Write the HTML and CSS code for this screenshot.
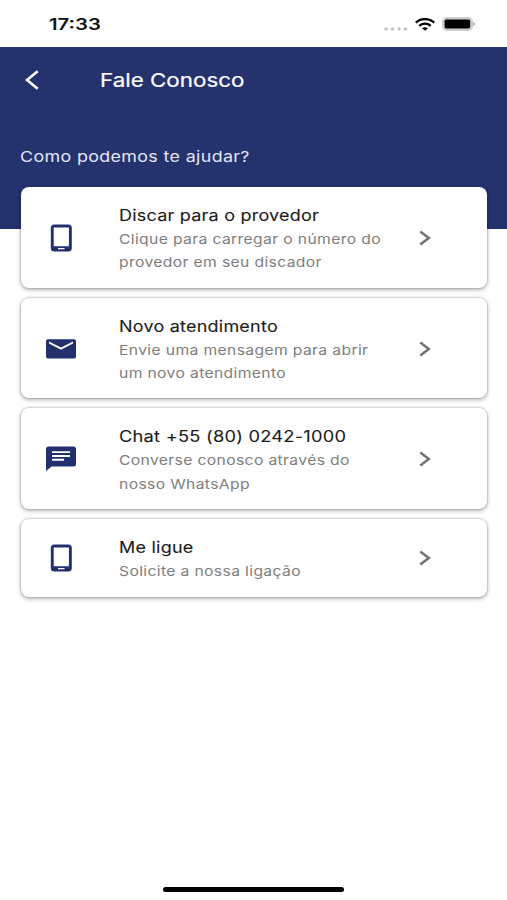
FILE: index.html
```html
<!DOCTYPE html>
<html lang="pt-BR">
<head>
<meta charset="utf-8">
<title>Fale Conosco</title>
<link rel="stylesheet" href="styles.css">
</head>
<body>
<div class="status">
  <span class="time">17:33</span>
  <div class="indicators">
    <svg class="dots" width="24" height="4" viewBox="0 0 24 4" fill="#c4c4c4"><circle cx="2" cy="2" r="1.8"/><circle cx="8.5" cy="2" r="1.8"/><circle cx="15" cy="2" r="1.8"/><circle cx="21.5" cy="2" r="1.8"/></svg>
    <svg class="wifi" width="20" height="13" viewBox="0 0 20 13" fill="none" stroke="#000" stroke-width="2.3"><path d="M.8 4.6C6-.2 14-.2 19.2 4.6M4.3 7.8c3.3-2.9 8.1-2.9 11.4 0"/><path d="M7 10.3c1.8-1.4 4.2-1.4 6 0L10 12.8z" fill="#000" stroke="none"/></svg>
    <svg class="battery" width="34" height="14" viewBox="0 0 34 14"><rect x=".9" y=".9" width="29.2" height="12.2" rx="4" fill="#ccc" stroke="#ccc" stroke-width="1.8"/><rect x="2.6" y="2.5" width="25.6" height="9" rx="1.8"/><path d="M31.3 5c2 .6 2 3.4 0 4z" fill="#aaa"/></svg>
  </div>
</div>
<header class="header">
  <div class="bar">
    <svg class="back" width="14" height="20" viewBox="0 0 14 20" fill="none" stroke="#fff" stroke-width="2.7"><path d="M12.7 1.2 2 10l10.7 8.8"/></svg>
    <h1 class="heading">Fale Conosco</h1>
  </div>
  <p class="question">Como podemos te ajudar?</p>
</header>
<main class="cards">
  <section class="card">
    <svg class="icon" viewBox="0 0 30 30" fill="#22306d"><path fill-rule="evenodd" d="M8.3 1.5h14a3.5 3.5 0 0 1 3.5 3.5v20a3.5 3.5 0 0 1-3.5 3.5h-14A3.5 3.5 0 0 1 4.8 25V5a3.5 3.5 0 0 1 3.5-3.5zM7.7 4.6v18.6h15.2V4.6zM12 25v1.3h6.5V25z"/></svg>
    <div class="text"><h2 class="title">Discar para o provedor</h2><p class="desc">Clique para carregar o número do<br>provedor em seu discador</p></div>
    <svg class="chevron" viewBox="0 0 12 16"><path d="M1.3 1.5 9.8 8l-8.5 6.5"/></svg>
  </section>
  <section class="card">
    <svg class="icon" viewBox="0 0 30 30" fill="#22306d"><path fill-rule="evenodd" d="M2 5.2h26a2 2 0 0 1 2 2v15.4a2 2 0 0 1-2 2H2a2 2 0 0 1-2-2V7.2a2 2 0 0 1 2-2zM3 7.5v2.1l12 6.2 12-6.2V7.5l-12 6.1z"/></svg>
    <div class="text"><h2 class="title">Novo atendimento</h2><p class="desc">Envie uma mensagem para abrir<br>um novo atendimento</p></div>
    <svg class="chevron" viewBox="0 0 12 16"><path d="M1.3 1.5 9.8 8l-8.5 6.5"/></svg>
  </section>
  <section class="card">
    <svg class="icon" viewBox="0 0 30 30" fill="#22306d"><path fill-rule="evenodd" d="M2.5 2.6h25A2.5 2.5 0 0 1 30 5.1V20a2.5 2.5 0 0 1-2.5 2.5H5.6L0 27.1v-22a2.5 2.5 0 0 1 2.5-2.5zM6 7.2v1.9h18V7.2zM6 11v1.9h18V11zM6 14.8v1.9h12v-1.9z"/></svg>
    <div class="text"><h2 class="title wide">Chat +55 (80) 0242-1000</h2><p class="desc">Converse conosco através do<br>nosso WhatsApp</p></div>
    <svg class="chevron" viewBox="0 0 12 16"><path d="M1.3 1.5 9.8 8l-8.5 6.5"/></svg>
  </section>
  <section class="card">
    <svg class="icon" viewBox="0 0 30 30" fill="#22306d"><path fill-rule="evenodd" d="M8.3 1.5h14a3.5 3.5 0 0 1 3.5 3.5v20a3.5 3.5 0 0 1-3.5 3.5h-14A3.5 3.5 0 0 1 4.8 25V5a3.5 3.5 0 0 1 3.5-3.5zM7.7 4.6v18.6h15.2V4.6zM12 25v1.3h6.5V25z"/></svg>
    <div class="text"><h2 class="title">Me ligue</h2><p class="desc">Solicite a nossa ligação</p></div>
    <svg class="chevron" viewBox="0 0 12 16"><path d="M1.3 1.5 9.8 8l-8.5 6.5"/></svg>
  </section>
</main>
<footer class="home"><div class="home-bar"></div></footer>
</body>
</html>
```
FILE: styles.css
```css
* { box-sizing: border-box; margin: 0; padding: 0; }
body {
  width: 507px;
  height: 900px;
  display: flex;
  flex-direction: column;
  overflow: hidden;
  background: #fff;
  font-family: Inter, "Liberation Sans", sans-serif;
}
svg { display: block; flex: none; }
.status {
  height: 47px;
  flex: none;
  display: flex;
  justify-content: space-between;
  align-items: center;
  padding: 1px 31px 0 49px;
}
.time, .heading, .question, .title, .desc {
  transform-origin: 0 50%;
  white-space: nowrap;
}
.time { font-size: 16px; font-weight: 600; line-height: 20px; color: #111; transform: scaleX(1.27); }
.indicators { display: flex; align-items: center; }
.dots { margin: 9px 7px 0 0; }
.wifi { margin-right: 7px; }
.header {
  height: 182px;
  flex: none;
  background: #24326e;
  color: #fff;
}
.bar { height: 66px; display: flex; align-items: center; padding-left: 25px; }
.back { margin-right: 61px; }
.heading { font-size: 19px; font-weight: 400; line-height: 24px; padding-top: 2px; -webkit-text-stroke: .2px currentColor; transform: scaleX(1.178); }
.question { margin: 32px 0 0 20px; font-size: 15px; line-height: 24px; letter-spacing: .3px; color: #e6e9f5; transform: scaleX(1.19); width: 200px; }
.cards {
  display: flex;
  flex-direction: column;
  gap: 9.9px;
  padding: 0 20px 0 21px;
  margin-top: -42px;
}
.card {
  display: flex;
  align-items: center;
  padding: 0 0 0 25px;
  background: #fff;
  border-radius: 8px;
  box-shadow: 0 0 1.5px 1px rgba(50, 70, 65, .2), 0 2px 4px rgba(0, 0, 0, .24), 0 1px 9px rgba(0, 0, 0, .05);
}
.icon { width: 30px; height: 30px; margin: 1px 43px 0 0; }
.text { width: 300px; padding: 17.1px 0 13.1px; }
.title { font-size: 15.5px; font-weight: 400; line-height: 24px; letter-spacing: .2px; color: #1c1c1c; -webkit-text-stroke: .1px currentColor; transform: scaleX(1.16); width: 200px; }
.title.wide { transform: scaleX(1.178); }
.desc { font-size: 13.5px; line-height: 23.3px; letter-spacing: .3px; color: #7e7e7e; transform: scaleX(1.163); width: 200px; }
.chevron { width: 12px; height: 16px; margin-top: 1px; fill: none; stroke: #747474; stroke-width: 2.6; }
.home { margin-top: auto; padding-bottom: 8px; display: flex; justify-content: center; }
.home-bar { width: 181px; height: 5px; border-radius: 3px; background: #000; }
```
